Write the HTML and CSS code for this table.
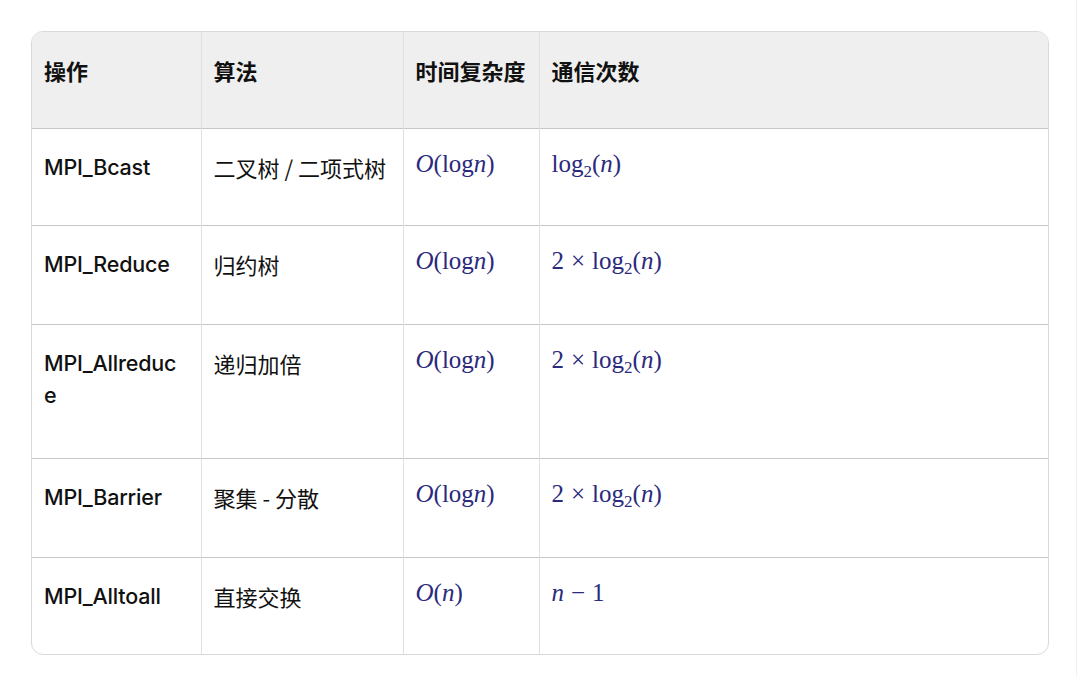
FILE: index.html
```html
<!DOCTYPE html>
<html lang="zh">
<head>
<meta charset="utf-8">
<link rel="stylesheet" href="styles.css">
</head>
<body>
<div class="page">
  <div class="card">
    <table class="tbl">
      <colgroup>
        <col class="c1"><col class="c2"><col class="c3"><col class="c4">
      </colgroup>
      <thead>
        <tr class="h0">
          <th>操作</th><th>算法</th><th>时间复杂度</th><th>通信次数</th>
        </tr>
      </thead>
      <tbody>
        <tr class="h1">
          <td class="op">MPI_Bcast</td>
          <td>二叉树 / 二项式树</td>
          <td class="m"><i>O</i>(log<i>n</i>)</td>
          <td class="m">log<sub>2</sub>(<i>n</i>)</td>
        </tr>
        <tr class="h2">
          <td class="op">MPI_Reduce</td>
          <td>归约树</td>
          <td class="m"><i>O</i>(log<i>n</i>)</td>
          <td class="m">2<span class="op2">×</span>log<sub>2</sub>(<i>n</i>)</td>
        </tr>
        <tr class="h3">
          <td class="op">MPI_Allreduce</td>
          <td>递归加倍</td>
          <td class="m"><i>O</i>(log<i>n</i>)</td>
          <td class="m">2<span class="op2">×</span>log<sub>2</sub>(<i>n</i>)</td>
        </tr>
        <tr class="h4">
          <td class="op">MPI_Barrier</td>
          <td>聚集 - 分散</td>
          <td class="m"><i>O</i>(log<i>n</i>)</td>
          <td class="m">2<span class="op2">×</span>log<sub>2</sub>(<i>n</i>)</td>
        </tr>
        <tr class="h5">
          <td class="op">MPI_Alltoall</td>
          <td>直接交换</td>
          <td class="m"><i>O</i>(<i>n</i>)</td>
          <td class="m"><i>n</i><span class="op2">−</span>1</td>
        </tr>
      </tbody>
    </table>
  </div>
</div>
</body>
</html>
```

FILE: styles.css
```css
html, body {
  margin: 0;
  padding: 0;
  background: #ffffff;
}
.page {
  width: 1077px;
  height: 677px;
  box-sizing: border-box;
  padding: 31px 0 0 31px;
  border-right: 1px solid #f1f1f1;
}
.card {
  width: 1018px;
  box-sizing: border-box;
  border: 1px solid #d9d9d9;
  border-radius: 12px;
  overflow: hidden;
}
.tbl {
  width: 100%;
  border-collapse: collapse;
  table-layout: fixed;
  font-family: "Noto Sans CJK SC", "Noto Sans", sans-serif;
  font-size: 22px;
  font-weight: 400;
  color: #111111;
}
.c1 { width: 169px; }
.c2 { width: 202px; }
.c3 { width: 136px; }
.tbl th, .tbl td {
  text-align: left;
  vertical-align: top;
  padding: 22px 12px 0 12px;
  line-height: 32px;
  border-left: 1px solid #e0e0e0;
  word-break: break-all;
}
.tbl td.op {
  font-family: "Inter", "Noto Sans CJK SC", sans-serif;
  font-size: 21.5px;
  font-weight: 500;
  letter-spacing: -0.2px;
  padding-right: 14px;
}
.tbl th:first-child, .tbl td:first-child { border-left: none; }
.tbl th {
  background: #efefef;
  font-weight: 700;
}
.tbl tbody tr { border-top: 1.5px solid #c6c6c6; }
.h0 { height: 96px; }
.h1 { height: 97px; }
.h2 { height: 99px; }
.h3 { height: 134px; }
.h4 { height: 99px; }
.h5 { height: 97px; }
.tbl td.m {
  font-family: "Liberation Serif", "DejaVu Serif", serif;
  font-size: 25px;
  font-weight: 400;
  color: #2b2a7c;
  padding-top: 19px;
  white-space: nowrap;
  word-break: normal;
}
.m i { font-style: italic; }
.m sub {
  font-size: 17px;
  vertical-align: -5px;
  line-height: 0;
}
.op2 { padding: 0 7px; }
```
